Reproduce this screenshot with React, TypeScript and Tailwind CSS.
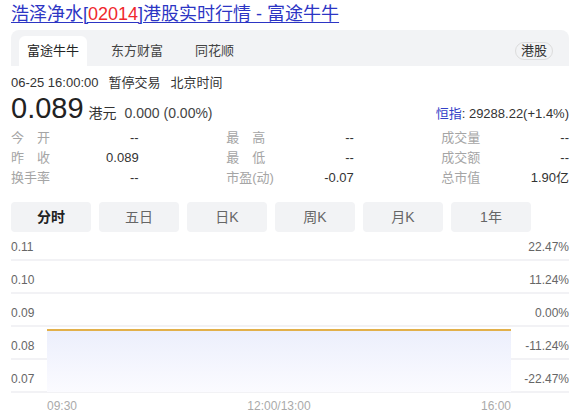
import React from 'react';

const stats = [
  [
    { label: ['今', '开'], value: '--' },
    { label: ['最', '高'], value: '--' },
    { label: ['成', '交', '量'], value: '--' },
  ],
  [
    { label: ['昨', '收'], value: '0.089' },
    { label: ['最', '低'], value: '--' },
    { label: ['成', '交', '额'], value: '--' },
  ],
  [
    { label: ['换', '手', '率'], value: '--' },
    { label: ['市盈(动)'], value: '-0.07' },
    { label: ['总', '市', '值'], value: '1.90亿' },
  ],
];

const periods = ['分时', '五日', '日K', '周K', '月K', '1年'];

const axis = [
  { price: '0.11', pct: '22.47%' },
  { price: '0.10', pct: '11.24%' },
  { price: '0.09', pct: '0.00%' },
  { price: '0.08', pct: '-11.24%' },
  { price: '0.07', pct: '-22.47%' },
];

export default function App() {
  return (
    <div className="w-[580px] h-[414px] overflow-hidden bg-white px-[11px] font-['Liberation_Sans','Noto_Sans_CJK_SC',sans-serif] text-[#333]">
      <div className="pt-[2px] text-[18px] leading-[24px] text-[#2c35c4] underline decoration-1 underline-offset-2">
        浩泽净水[<span className="text-[#f0282d]">02014</span>]港股实时行情 - 富途牛牛
      </div>

      <div className="mt-[4px] h-[36px] flex items-end bg-[#f2f3f5] rounded-t-[8px] pl-[8px] pr-[16px]">
        <div className="h-[30px] px-[8px] flex items-center bg-white rounded-t-[6px] text-[13px] text-[#222]">富途牛牛</div>
        <div className="h-[30px] px-[8px] ml-[16px] flex items-center text-[13px] text-[#444]">东方财富</div>
        <div className="h-[30px] px-[8px] ml-[16px] flex items-center text-[13px] text-[#444]">同花顺</div>
        <div className="ml-auto mb-[6px] h-[18px] px-[5px] flex items-center rounded-full border border-[#dcdcdc] text-[13px] text-[#333]">港股</div>
      </div>

      <div className="mt-[8px] text-[13px] leading-[18px] text-[#333] whitespace-nowrap">
        06-25 16:00:00<span className="ml-[10px]">暂停交易</span><span className="ml-[10px]">北京时间</span>
      </div>

      <div className="flex items-baseline">
        <span className="text-[29px] leading-[32px] text-[#222]">0.089</span>
        <span className="ml-[5px] text-[14px] text-[#333]">港元</span>
        <span className="ml-[8px] text-[14px] text-[#444]">0.000 (0.00%)</span>
        <span className="ml-auto text-[13px] text-[#333]">
          <span className="text-[#3340c8]">恒指</span>: 29288.22(+1.4%)
        </span>
      </div>

      <div className="mt-[4px] grid grid-cols-3 gap-x-[87.5px] text-[13px] leading-[20px]">
        {stats.flat().map((s, i) => (
          <div key={i} className="flex justify-between whitespace-nowrap">
            <span className="min-w-[39px] flex justify-between text-[#a5a5a5]">
              {s.label.map((c, j) => (
                <span key={j}>{c}</span>
              ))}
            </span>
            <span className="text-[#333]">{s.value}</span>
          </div>
        ))}
      </div>

      <div className="mt-[14px] flex gap-[8px]">
        {periods.map((p, i) => (
          <div
            key={p}
            className={
              i === 0
                ? 'w-[80px] h-[30px] flex items-center justify-center rounded-[4px] bg-[#f2f3f5] text-[14px] font-bold text-[#222]'
                : 'w-[80px] h-[30px] flex items-center justify-center rounded-[4px] bg-[#f2f3f5] text-[14px] text-[#666]'
            }
          >
            {p}
          </div>
        ))}
      </div>

      <div className="relative">
        {axis.map((a, i) => (
          <div
            key={a.price}
            className={
              i === 0
                ? 'h-[29px] flex items-end justify-between pb-[5px] border-b-2 border-[#f2f2f5] text-[12px] leading-[14px] text-[#666]'
                : 'h-[33px] flex items-end justify-between pb-[5px] border-b-2 border-[#f2f2f5] text-[12px] leading-[14px] text-[#666]'
            }
          >
            <span>{a.price}</span>
            <span>{a.pct}</span>
          </div>
        ))}
        <div className="absolute left-[36px] w-[464px] top-[97px] h-[63px] border-t-2 border-[#e2b04a] bg-gradient-to-b from-[#eceffc] to-[#fbfbff]" />
      </div>

      <div className="h-[26px] ml-[36px] w-[464px] flex items-center justify-between text-[12px] text-[#aaa]">
        <span>09:30</span>
        <span>12:00/13:00</span>
        <span>16:00</span>
      </div>
    </div>
  );
}
